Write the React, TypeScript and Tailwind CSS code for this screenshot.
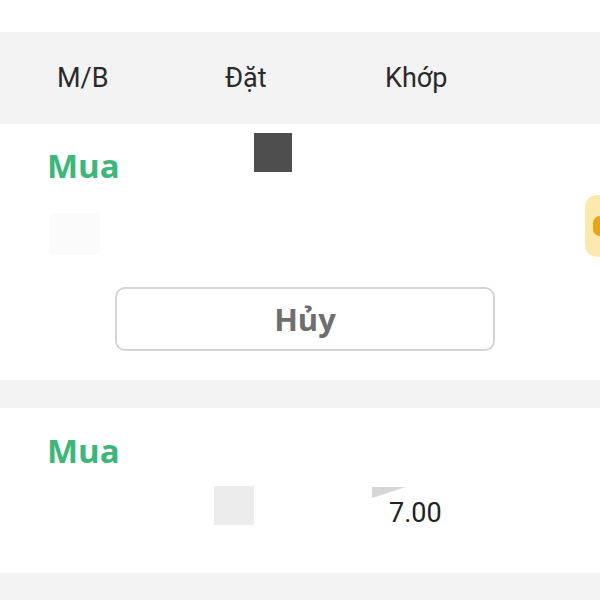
import React from "react";

const mua = "text-[33px] leading-[40px] font-bold text-[#3bb879] font-['Open_Sans',sans-serif]";

export default function App() {
  return (
    <div className="w-[600px] h-[600px] overflow-hidden bg-white flex flex-col">
      <div className="h-[32px] bg-white" />
      <div className="h-[92px] bg-[#f3f3f3] flex items-center pl-[57px] text-[27px] text-[#2a2a2a] font-['Roboto',sans-serif]">
        <div className="w-[168px]">M/B</div>
        <div className="w-[160px]">Đặt</div>
        <div>Khớp</div>
      </div>

      <div className="h-[256px] bg-white flex flex-col">
        <div className="flex items-start pl-[47px]">
          <div className={`w-[207px] pt-[22px] ${mua}`}>Mua</div>
          <div className="mt-[9px] w-[38px] h-[39px] bg-[#4e4e4e]" />
        </div>
        <div className="mt-[9px] flex items-start justify-between pl-[50px]">
          <div className="mt-[18px] w-[50px] h-[42px] bg-[#fbfbfb] rounded" />
          <div className="w-[15px] h-[62px] overflow-hidden">
            <div className="w-[40px] h-[62px] bg-[#fde8ae] rounded-[12px] flex items-center">
              <div className="ml-[8px] w-[14px] h-[20px] rounded-full bg-[#e8a417]" />
            </div>
          </div>
        </div>
        <div className="ml-[115px] mt-[30px] w-[380px] h-[64px] border-2 border-[#d4d4d4] rounded-[10px] flex items-center justify-center text-[31px] font-bold text-[#6e6e6e] font-['Open_Sans',sans-serif]">
          Hủy
        </div>
      </div>

      <div className="h-[28px] bg-[#f3f3f3]" />

      <div className="h-[165px] bg-white flex flex-col">
        <div className={`pl-[47px] pt-[23px] ${mua}`}>Mua</div>
        <div className="mt-[15px] flex items-start pl-[214px]">
          <div className="w-[40px] h-[39px] bg-[#ececec]" />
          <div className="ml-[118px] flex flex-col">
            <svg width="34" height="11" viewBox="0 0 34 11" className="mt-[1px]">
              <polygon points="0,0 34,0 0,11" fill="#d6d6d6" />
            </svg>
            <div className="ml-[17px] -mt-[1px] text-[27px] leading-[32px] text-[#222] font-['Roboto',sans-serif]">
              7.00
            </div>
          </div>
        </div>
      </div>

      <div className="flex-1 bg-[#f3f3f3]" />
    </div>
  );
}
